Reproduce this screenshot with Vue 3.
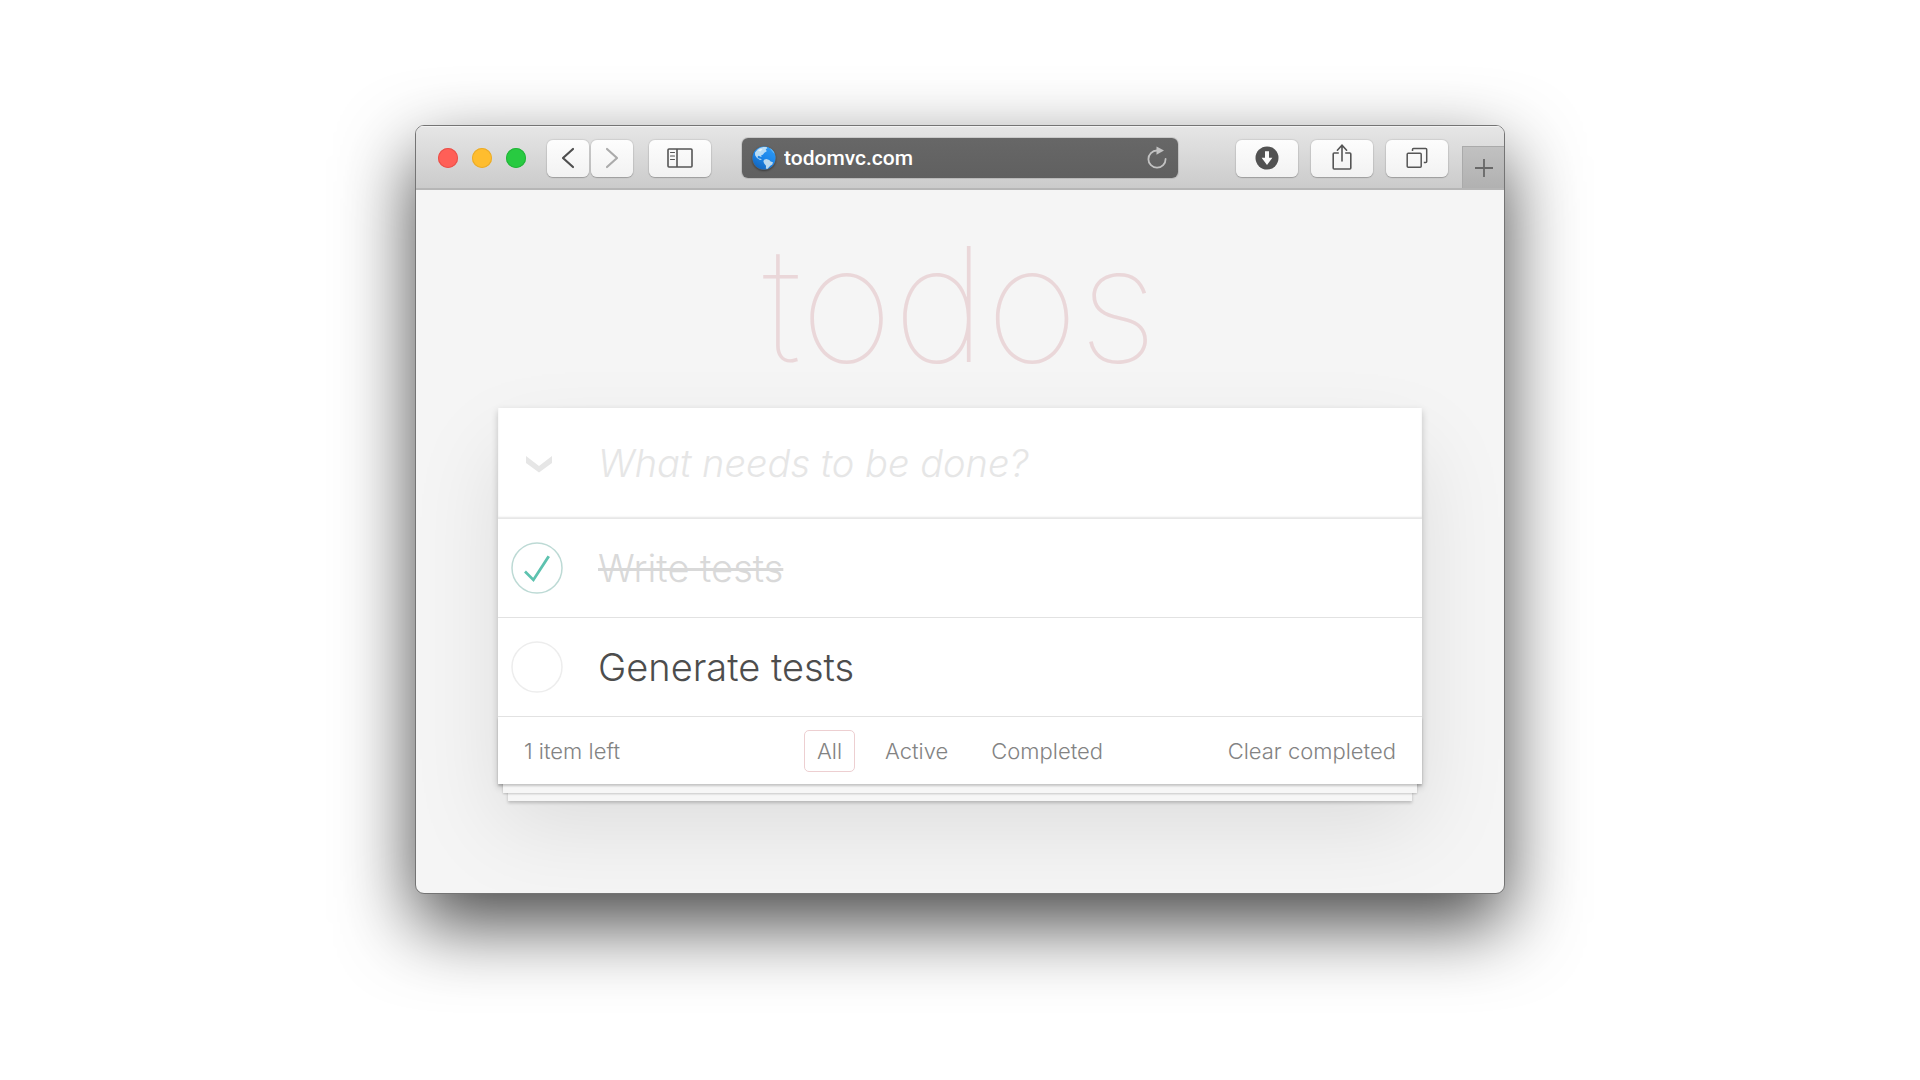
<script setup>
import { ref, computed } from 'vue'

const address = ref('todomvc.com')
const draft = ref('')
const filter = ref('All')
const filters = ['All', 'Active', 'Completed']
const todos = ref([
  { id: 1, title: 'Write tests', done: true },
  { id: 2, title: 'Generate tests', done: false },
])

const remaining = computed(() => todos.value.filter((t) => !t.done).length)
const visible = computed(() =>
  todos.value.filter((t) => filter.value === 'All' || t.done === (filter.value === 'Completed'))
)
const allDone = computed({
  get: () => remaining.value === 0,
  set: (value) => todos.value.forEach((t) => (t.done = value)),
})

function addTodo() {
  const title = draft.value.trim()
  if (!title) return
  todos.value.push({ id: Date.now(), title, done: false })
  draft.value = ''
}

function clearCompleted() {
  todos.value = todos.value.filter((t) => !t.done)
}
</script>

<template>
  <div class="desktop">
    <div class="window">
      <header class="toolbar">
        <div class="group">
          <div class="lights">
            <button class="light close" aria-label="Close"></button>
            <button class="light minimize" aria-label="Minimize"></button>
            <button class="light zoom" aria-label="Zoom"></button>
          </div>
          <div class="history">
            <button class="tool narrow" aria-label="Back">
              <svg width="14" height="22" viewBox="0 0 14 22"><path d="M12 2 2 11l10 9" fill="none" stroke="#4f4f4f" stroke-width="2.2" stroke-linecap="round" stroke-linejoin="round" /></svg>
            </button>
            <button class="tool narrow" aria-label="Forward">
              <svg width="14" height="22" viewBox="0 0 14 22"><path d="m2 2 10 9-10 9" fill="none" stroke="#ababab" stroke-width="2.2" stroke-linecap="round" stroke-linejoin="round" /></svg>
            </button>
          </div>
          <button class="tool" aria-label="Show sidebar">
            <svg width="26" height="20" viewBox="0 0 26 20" fill="none" stroke="#555">
              <rect x="1" y="1" width="24" height="18" rx="1" stroke-width="1.6" />
              <path d="M10 1v18" stroke-width="1.6" />
              <path d="M3.5 4.5h4M3.5 8h4M3.5 11.500h4" stroke-width="1.1" stroke-linecap="round" />
            </svg>
          </button>
        </div>

        <div class="address">
          <svg class="globe" width="24" height="24" viewBox="0 0 24 24" aria-hidden="true">
            <defs>
              <linearGradient id="sea" x1="0.8" y1="0" x2="0.2" y2="1">
                <stop offset="0" stop-color="#2f9bf5" />
                <stop offset="0.5" stop-color="#1c86ea" />
                <stop offset="1" stop-color="#1463b8" />
              </linearGradient>
            </defs>
            <circle cx="12" cy="12" r="11.500" fill="url(#sea)" />
            <path d="M5.500 3.600C8 1.400 11 .6 14.600 1l.8 1.600-1.700.5 1 2.200-2.300 1.400-1.600 2-1.600.5.4 1.700-1.500-.3-1.500-.9-1.200 1.300 1.300 1.400 2.100.4 1 1.300-2.200-.3L5 12 3.100 9.200 3 6.600z" fill="#b9dcf5" />
            <path d="m12 13.800 2.300-.7 3 1 1.300 1.500 2.400.7-.7 2.200-2 1.300-1.800 2-1.200 1.100-1.400-.3.1-2.900-1.800-2.300-.8-2z" fill="#bcd9ee" />
            <path d="M17.600 1.900c2.400 1.200 4.300 3.300 5.200 5.700l-1.300-.7-1.600-2z" fill="#63b8f7" />
            <path d="m6 4.500 3-1.700 1.500.6-2.200 2.200z" fill="#e4f3fc" />
          </svg>
          <input v-model="address" type="text" aria-label="Address" />
          <button class="reload" aria-label="Reload">
            <svg width="22" height="26" viewBox="0 0 22 26">
              <path d="M11 5.500A8.600 8.600 0 1 0 19.600 14" fill="none" stroke="#c2c2c2" stroke-width="1.8" stroke-linecap="round" />
              <path d="M10.500 1.500 18 5.600l-7.500 4.200z" fill="#c2c2c2" />
            </svg>
          </button>
        </div>

        <div class="group right">
          <button class="tool" aria-label="Downloads">
            <svg width="24" height="24" viewBox="0 0 24 24">
              <circle cx="12" cy="12" r="11.500" fill="#525252" />
              <path d="M10 5.200h4v6.600h3.400L12 19l-5.400-7.200H10z" fill="#fbfbfb" />
            </svg>
          </button>
          <button class="tool" aria-label="Share">
            <svg class="share" width="20" height="28" viewBox="0 0 20 28" fill="none" stroke="#555" stroke-width="1.6">
              <path d="M6.800 10H2.200Q1.200 10 1.200 11v14q0 1 1 1h15.600q1 0 1-1V11q0-1-1-1h-4.600" />
              <path d="M10 18V2.500M5.400 7.200 10 2.200l4.600 5" stroke-linecap="round" />
            </svg>
          </button>
          <button class="tool" aria-label="Show all tabs">
            <svg width="22" height="22" viewBox="0 0 22 22" fill="none" stroke="#555" stroke-width="1.5">
              <rect x="1.200" y="6.200" width="14" height="14" rx="1" />
              <path d="M6.500 4V2.500q0-1 1-1h12.200q1 0 1 1v12q0 1-1 1h-1.900" />
            </svg>
          </button>
          <button class="new-tab" aria-label="New tab">
            <svg width="20" height="20" viewBox="0 0 20 20"><path d="M10 1v18M1 10h18" stroke="#686868" stroke-width="1.800" /></svg>
          </button>
        </div>
      </header>

      <main class="page">
        <h1>todos</h1>

        <section class="card">
          <form class="entry" @submit.prevent="addTodo">
            <label class="toggle-all">
              <input v-model="allDone" type="checkbox" aria-label="Mark all as complete" />
              <svg width="26" height="18" viewBox="0 0 26 18"><path d="m0 1 13 10L26 1v7L13 17.500 0 8z" fill="#e6e6e6" /></svg>
            </label>
            <input v-model="draft" class="draft" type="text" placeholder="What needs to be done?" aria-label="New todo" />
          </form>

          <ul class="list">
            <li v-for="todo in visible" :key="todo.id">
              <label class="item" :class="{ done: todo.done }">
                <input v-model="todo.done" type="checkbox" />
                <svg width="52" height="52" viewBox="0 0 52 52" aria-hidden="true">
                  <circle cx="26" cy="26" r="25" fill="none" :stroke="todo.done ? '#bddad5' : '#ededed'" stroke-width="1.500" />
                  <path v-if="todo.done" d="M72 25 42 71 27 56l-4 4 20 20 34-52z" transform="translate(2 1.600) scale(.48)" fill="#5dc2af" />
                </svg>
                <span>{{ todo.title }}</span>
              </label>
            </li>
          </ul>

          <footer class="summary">
            <span>{{ remaining }} item left</span>
            <nav class="filters">
              <a v-for="name in filters" :key="name" href="#" :class="{ selected: name === filter }" @click.prevent="filter = name">{{ name }}</a>
            </nav>
            <button class="clear" @click="clearCompleted">Clear completed</button>
          </footer>
        </section>
      </main>
    </div>
  </div>
</template>

<style>
body {
  margin: 0;
  background: #fff;
}
</style>

<style scoped>
* {
  box-sizing: border-box;
}

button,
input {
  margin: 0;
  padding: 0;
  border: 0;
  background: none;
  font: inherit;
  color: inherit;
  outline: none;
}

svg {
  display: block;
  flex: none;
}

.desktop {
  min-height: 100vh;
  padding: 125px 24px 60px;
  font-family: Inter, "Liberation Sans", sans-serif;
}

.window {
  width: 100%;
  max-width: 1090px;
  margin: 0 auto;
  border: 1px solid #747474;
  border-radius: 9px;
  background: #f5f5f5;
  box-shadow: 0 30px 74px rgba(0, 0, 0, 0.72);
  overflow: hidden;
}

/* Browser toolbar */
.toolbar {
  display: flex;
  align-items: center;
  height: 64px;
  padding-top: 2px;
  border-bottom: 2px solid #b6b6b6;
  background: linear-gradient(#e6e6e6, #cbcbcb);
  box-shadow: inset 0 1px 0 #f3f3f3;
}

.group {
  display: flex;
  flex: 1;
  align-items: center;
  gap: 16px;
}

.group.right {
  align-self: stretch;
  justify-content: flex-end;
  gap: 13px;
}

.lights {
  display: flex;
  gap: 14px;
  margin: 0 5px 0 22px;
}

.light {
  width: 20px;
  height: 20px;
  border-radius: 50%;
}

.close {
  background: #ff5f57;
  box-shadow: inset 0 0 0 1px #e8524b;
}

.minimize {
  background: #ffbd2e;
  box-shadow: inset 0 0 0 1px #e9ab2b;
}

.zoom {
  background: #28ca41;
  box-shadow: inset 0 0 0 1px #24b43a;
}

.history {
  display: flex;
  gap: 2px;
}

.tool {
  display: flex;
  align-items: center;
  justify-content: center;
  width: 62px;
  height: 37px;
  border-radius: 6px;
  background: linear-gradient(#fdfdfd, #f2f2f2);
  box-shadow: 0 0 1px 1px rgba(0, 0, 0, 0.08), 0 1px 1px rgba(0, 0, 0, 0.18);
}

.tool.narrow {
  width: 42px;
}

.share {
  margin-bottom: 2px;
}

.new-tab {
  display: flex;
  align-items: center;
  justify-content: center;
  align-self: flex-end;
  width: 42px;
  height: 42px;
  margin-left: 1px;
  border: solid #aaa;
  border-width: 1px 0 0 1px;
  background: linear-gradient(#c1c1c1, #b1b1b1);
}

.address {
  display: flex;
  align-items: center;
  flex: 0 1 436px;
  height: 40px;
  padding: 0 10px;
  border-radius: 6px;
  background: linear-gradient(#676767, #606060);
  box-shadow: 0 0 0 1px rgba(0, 0, 0, 0.1);
  color: #fff;
  font-family: Roboto, sans-serif;
  font-size: 21px;
  font-weight: 500;
}

.address input {
  flex: 1;
  min-width: 0;
  height: 40px;
  padding-left: 8px;
}

.globe {
  border-radius: 50%;
  box-shadow: 0 1px 2px rgba(0, 0, 0, 0.4);
}

.reload {
  height: 28px;
}

/* Todo page */
.page {
  padding: 18px 82px 109px;
}

h1 {
  margin: 0 0 8px;
  color: #ead7d9;
  font-size: 160px;
  font-weight: 100;
  line-height: 192px;
  text-align: center;
}

.card {
  background: #fff;
  box-shadow: 0 3px 7px rgba(0, 0, 0, 0.2), 0 42px 84px rgba(0, 0, 0, 0.1);
  color: #4d4d4d;
  font-size: 38px;
  font-weight: 300;
}

.entry {
  display: flex;
  height: 111px;
  box-shadow: inset 0 -2px 2px rgba(0, 0, 0, 0.1);
}

.toggle-all {
  position: relative;
  display: flex;
  align-items: center;
  width: 100px;
  padding-left: 28px;
}

.toggle-all input,
.item input {
  position: absolute;
  inset: 0;
  opacity: 0;
}

.draft {
  flex: 1;
  min-width: 0;
  padding-bottom: 2px;
}

.draft::placeholder {
  color: #e6e6e6;
  font-style: italic;
  opacity: 1;
}

.list {
  margin: 0;
  padding: 0;
  list-style: none;
}

.item {
  position: relative;
  display: flex;
  align-items: center;
  gap: 35px;
  height: 99px;
  padding-left: 13px;
  border-bottom: 1px solid #e2e2e2;
}

.item.done {
  color: #d9d9d9;
}

.done span {
  text-decoration: line-through;
  text-decoration-thickness: 3px;
}

/* The sheets of paper under the card are stacked shadows */
.summary {
  display: grid;
  grid-template-columns: 1fr auto 1fr;
  align-items: center;
  height: 67px;
  padding: 0 26px;
  color: #838383;
  font-size: 22px;
  box-shadow:
    0 2px 2px rgba(0, 0, 0, 0.2),
    0 14px 0 -5px #f6f6f6,
    0 15px 2px -5px rgba(0, 0, 0, 0.2),
    0 27px 0 -10px #f6f6f6,
    0 29px 3px -10px rgba(0, 0, 0, 0.2);
}

.filters {
  display: flex;
  gap: 17px;
}

.filters a {
  padding: 0 12px;
  border: 1px solid transparent;
  border-radius: 5px;
  color: inherit;
  line-height: 40px;
  text-decoration: none;
}

.filters a.selected {
  border-color: #edcfd1;
}

.clear {
  justify-self: end;
}
</style>
